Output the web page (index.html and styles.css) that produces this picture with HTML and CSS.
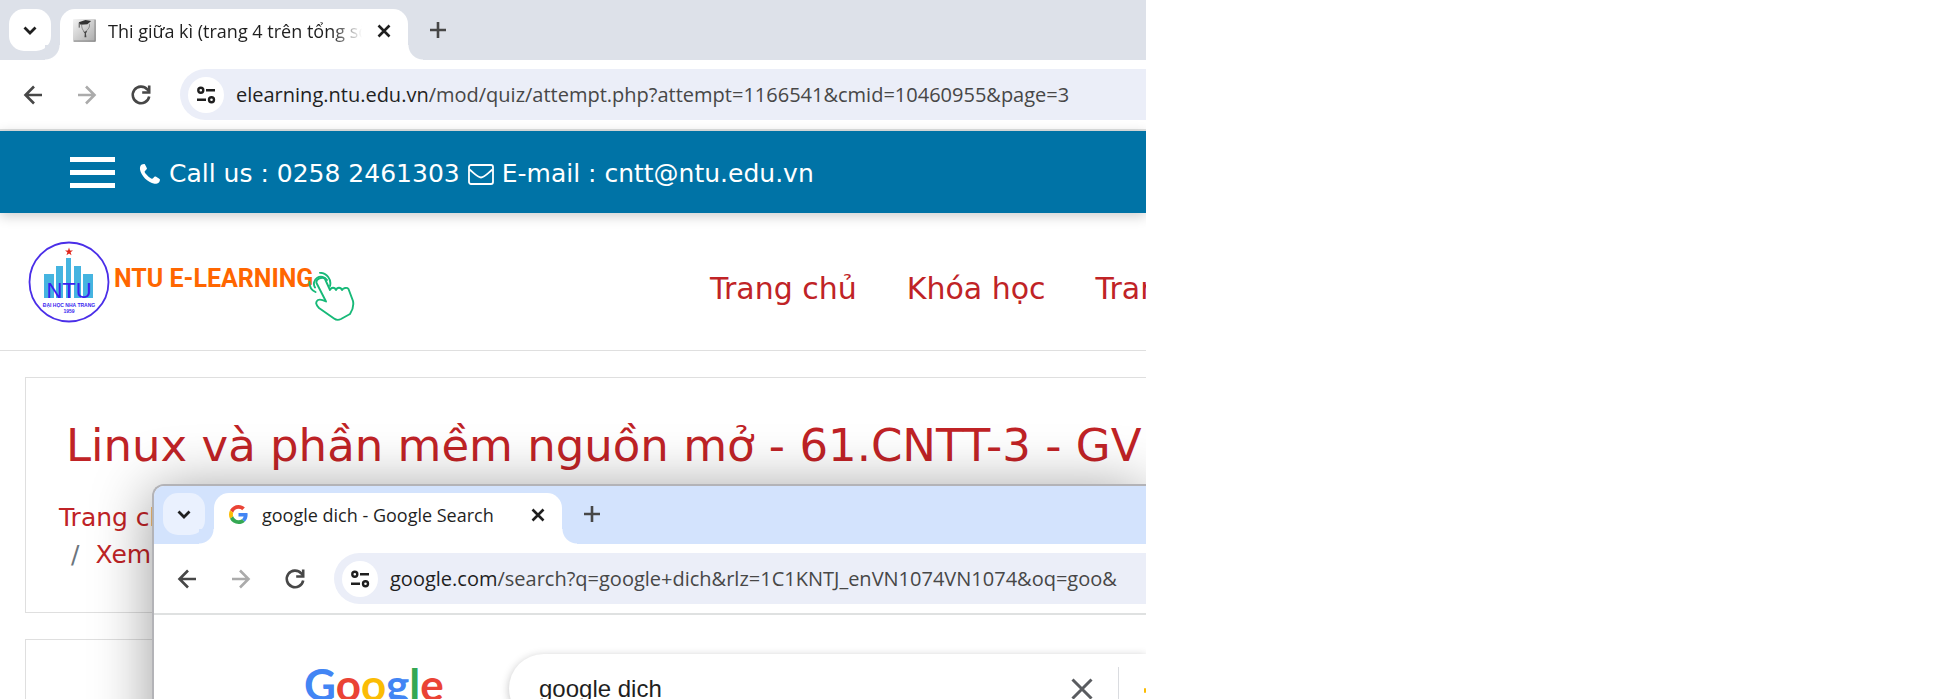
FILE: index.html
```html
<!DOCTYPE html>
<html lang="vi">
<head>
<meta charset="utf-8">
<title>Thi giữa kì</title>
<link rel="stylesheet" href="styles.css">
</head>
<body>
<svg class="sprite" aria-hidden="true">
  <symbol id="chevron" viewBox="0 0 20 20"><path d="M4.500 7.500l5.500 5.500 5.500-5.500" fill="none" stroke="#1f1f1f" stroke-width="2.800"/></symbol>
  <symbol id="close" viewBox="0 0 20 20"><path d="M4.500 4.500l11 11M15.500 4.500l-11 11" stroke="#1f1f1f" stroke-width="2.600"/></symbol>
  <symbol id="plus" viewBox="0 0 20 20"><path d="M10 2v16M2 10h16" stroke="#474747" stroke-width="2.600"/></symbol>
  <symbol id="back" viewBox="0 0 24 24"><path d="M21 12H5M13 3.500L4.500 12l8.500 8.500" fill="none" stroke="currentColor" stroke-width="2.600"/></symbol>
  <symbol id="forward" viewBox="0 0 24 24"><path d="M3 12h16M11 3.500l8.500 8.500-8.500 8.500" fill="none" stroke="currentColor" stroke-width="2.600"/></symbol>
  <symbol id="reload" viewBox="0 0 24 24"><path d="M20.200 13.500a8.300 8.300 0 1 1-2-7.200L20 8.500" fill="none" stroke="#474747" stroke-width="2.600"/><path d="M20.200 2.500v7h-7" fill="none" stroke="#474747" stroke-width="2.600"/></symbol>
  <symbol id="tune" viewBox="0 0 20 20"><g fill="none" stroke="#1f1f1f" stroke-width="2.400"><circle cx="4.800" cy="5.200" r="2.500"/><path d="M10 5.200h9M1 14.800h9"/><circle cx="15.500" cy="14.800" r="2.500"/></g></symbol>
</svg>
<main class="desktop">
  <section class="browser">
    <div class="tabstrip">
      <button class="tab-search" aria-label="Search tabs"><svg class="i20"><use href="#chevron"/></svg></button>
      <div class="tab">
        <svg class="favicon" viewBox="0 0 24 24"><defs><linearGradient id="fg" x1="0" y1="0" x2="1" y2="1"><stop offset="0" stop-color="#f4f4f4"/><stop offset="1" stop-color="#a9a9a9"/></linearGradient></defs><rect width="24" height="24" rx="1" fill="url(#fg)"/><path d="M23 1v22H1" fill="none" stroke="#888"/><path d="M6 3.500L13 1l6 1-4 3.500-7 .5z" fill="#333"/><path d="M6.500 4v5" fill="none" stroke="#444"/><path d="M9 6c0 3 1 6 3 7M17 5c1 3-1 6-4 8" fill="none" stroke="#888"/><path d="M10 12l2 1.500 3-1.500-1.500 3 .5 4h-2l.300-4z" fill="#444"/></svg>
        <span class="tab-title fade">Thi giữa kì (trang 4 trên tổng số</span>
        <button class="bare" aria-label="Close tab"><svg class="i20"><use href="#close"/></svg></button>
      </div>
      <button class="bare new-tab" aria-label="New tab"><svg class="i20"><use href="#plus"/></svg></button>
    </div>
    <div class="toolbar">
      <button class="bare nav-btn" aria-label="Back"><svg class="i24"><use href="#back"/></svg></button>
      <button class="bare nav-btn off" aria-label="Forward"><svg class="i24"><use href="#forward"/></svg></button>
      <button class="bare nav-btn" aria-label="Reload"><svg class="i24"><use href="#reload"/></svg></button>
      <div class="omnibox">
        <button class="site-info" aria-label="Site information"><svg class="i20"><use href="#tune"/></svg></button>
        <span class="url"><b>elearning.ntu.edu.vn</b>/mod/quiz/attempt.php?attempt=1166541&amp;cmid=10460955&amp;page=3</span>
      </div>
    </div>
    <div class="contact">
      <button class="bare burger" aria-label="Menu"><i></i><i></i><i></i></button>
      <p class="contact-text">
        <svg class="phone" viewBox="0 0 22 22"><path d="M21 16.500c0 1-.6 2.600-1.100 3.100-1 1-3 1.400-4.400 1.200C8.500 19.500 2 12.500 1 6.500.8 4.500 1.300 2.500 2.800 1.600 3.800 1 5 .8 5.600 1c.4.200 2.400 4 2.400 4.600 0 1.200-2.400 2.200-2.400 3.200 0 1.400 5.600 7 7.400 7 1 0 2-2.400 3.200-2.400.6 0 4.600 2.200 4.800 3.100z" fill="#fff"/></svg>
        <span>Call us : 0258 2461303</span>
        <svg class="mail" viewBox="0 0 26 22"><rect x="1" y="2" width="24" height="19" rx="2" fill="none" stroke="#fff" stroke-width="1.800"/><path d="M1.500 6.500c4 3 8 8 11.500 8s7.500-5 11.500-8" fill="none" stroke="#fff" stroke-width="1.800"/></svg>
        <span>E-mail : cntt@ntu.edu.vn</span>
      </p>
    </div>
    <header class="site-head">
      <a class="brand" href="#">
        <svg class="seal" viewBox="0 0 82 82"><circle cx="41" cy="41" r="39.500" fill="#fff" stroke="#4a2ee8" stroke-width="1.800"/><path d="M41 6.500l1 3h3l-2.400 1.800.9 3L41 12.500l-2.500 1.800.9-3L37 9.500h3z" fill="#e0251b"/><path d="M16 33h10v24H16zM28 25h7v32h-7zM38 17h5v40h-5zM46 25h7v32h-7zM55 33h10v24H55z" fill="#45b4e0"/><text x="41" y="57" class="seal-name">NTU</text><text x="41" y="66" class="seal-sub">ĐẠI HỌC NHA TRANG</text><text x="41" y="72" class="seal-sub">1959</text></svg>
        <span class="brand-name">NTU E-LEARNING</span>
        <svg class="hand" viewBox="0 0 50 50"><g fill="none" stroke="#17b978" stroke-width="1.900" stroke-linejoin="round" stroke-linecap="round"><path d="M20 29.500L10.500 11c-1-4 6-7 8.500-4l5 11c1-3 5-3 6 0 1-3 5-3 6 0 1-2 5-3 6.500-1l4.500 12c1 5-1 10-3 13l-9 5c-2 1-5 1-7-.5L13 36c-3-3-4-6-1-8 2-1 5 0 8 1.500z" fill="#fff"/><path d="M9 15.500A7 7 0 1 1 21 8M9.500 20A10.500 10.500 0 0 1 3.500 10M14 .8A10.500 10.500 0 0 1 24 14"/></g></svg>
      </a>
      <nav class="menu"><a href="#">Trang chủ</a><a href="#">Khóa học</a><a href="#">Trang</a></nav>
    </header>
    <div class="page">
      <article class="card">
        <h1>Linux và phần mềm nguồn mở - 61.CNTT-3 - GV</h1>
        <ol class="crumbs"><li><a href="#">Trang chủ</a></li><li><a href="#">Xem</a></li></ol>
      </article>
      <article class="card next"></article>
    </div>
  </section>

  <section class="browser popup">
    <div class="tabstrip">
      <button class="tab-search" aria-label="Search tabs"><svg class="i20"><use href="#chevron"/></svg></button>
      <div class="tab">
        <svg class="favicon google" viewBox="0 0 48 48"><path fill="#EA4335" d="M24 9.500c3.540 0 6.710 1.220 9.210 3.600l6.850-6.850C35.900 2.380 30.470 0 24 0 14.620 0 6.510 5.380 2.560 13.220l7.980 6.190C12.430 13.720 17.740 9.500 24 9.500z"/><path fill="#4285F4" d="M46.980 24.550c0-1.570-.15-3.090-.38-4.550H24v9.020h12.940c-.58 2.960-2.260 5.480-4.780 7.180l7.730 6c4.510-4.180 7.090-10.360 7.090-17.650z"/><path fill="#FBBC05" d="M10.530 28.590c-.48-1.450-.76-2.990-.76-4.590s.27-3.140.76-4.590l-7.980-6.190C.92 16.460 0 20.120 0 24c0 3.880.92 7.540 2.560 10.780l7.970-6.190z"/><path fill="#34A853" d="M24 48c6.480 0 11.930-2.130 15.890-5.810l-7.730-6c-2.150 1.450-4.920 2.300-8.160 2.300-6.260 0-11.570-4.220-13.470-9.910l-7.980 6.190C6.510 42.620 14.620 48 24 48z"/></svg>
        <span class="tab-title">google dich - Google Search</span>
        <button class="bare" aria-label="Close tab"><svg class="i20"><use href="#close"/></svg></button>
      </div>
      <button class="bare new-tab" aria-label="New tab"><svg class="i20"><use href="#plus"/></svg></button>
    </div>
    <div class="toolbar">
      <button class="bare nav-btn" aria-label="Back"><svg class="i24"><use href="#back"/></svg></button>
      <button class="bare nav-btn off" aria-label="Forward"><svg class="i24"><use href="#forward"/></svg></button>
      <button class="bare nav-btn" aria-label="Reload"><svg class="i24"><use href="#reload"/></svg></button>
      <div class="omnibox">
        <button class="site-info" aria-label="Site information"><svg class="i20"><use href="#tune"/></svg></button>
        <span class="url"><b>google.com</b>/search?q=google+dich&amp;rlz=1C1KNTJ_enVN1074VN1074&amp;oq=goo&amp;</span>
      </div>
    </div>
    <div class="results">
      <div class="wordmark"><span class="b">G</span><span class="r">o</span><span class="y">o</span><span class="b">g</span><span class="g">l</span><span class="r">e</span></div>
      <div class="searchbox">
        <input class="query" type="text" value="google dich" aria-label="Search">
        <button class="bare clear" aria-label="Clear"><svg class="i24" viewBox="0 0 24 24"><path d="M2.500 2.500l19 19M21.500 2.500l-19 19" stroke="#5a5c60" stroke-width="3"/></svg></button>
        <span class="rule"></span>
        <svg class="mic" viewBox="0 0 2 24"><rect y="11" width="2" height="5" rx="1" fill="#fbbc04"/></svg>
      </div>
    </div>
  </section>
</main>
</body>
</html>
```
FILE: styles.css
```css
* { box-sizing: border-box; }
body { margin: 0; background: #fff; font-family: "DejaVu Sans", sans-serif; height: 100vh; overflow: hidden; }
button { font: inherit; padding: 0; border: 0; }
svg { display: block; flex: none; }
a { color: #c02326; text-decoration: none; }
.sprite { position: absolute; width: 0; height: 0; }
.i20 { width: 20px; height: 20px; }
.i24 { width: 24px; height: 24px; }
.bare { background: none; display: flex; align-items: center; justify-content: center; flex: none; }

.desktop { position: relative; width: 59%; height: 100vh; overflow: hidden; }
.browser { --strip: #dde1e9; --chip: #fff; background: #fff; }

.tabstrip { display: flex; align-items: flex-start; height: 60px; padding: 9px 9px 0; background: var(--strip); }
.tab-search { display: flex; align-items: center; justify-content: center; flex: none; width: 42px; height: 42px; border-radius: 15px; background: var(--chip); }
.tab { position: relative; display: flex; align-items: center; gap: 12px; width: 348px; height: 51px; margin-left: 9px; padding: 0 14px 8px 13px; border-radius: 15px 15px 0 0; background: #fff; }
.tab::before, .tab::after { content: ""; position: absolute; bottom: 0; width: 15px; height: 15px; }
.tab::before { right: 100%; background: radial-gradient(circle at 0 0, var(--strip) 14px, #fff 15px); }
.tab::after { left: 100%; background: radial-gradient(circle at 100% 0, var(--strip) 14px, #fff 15px); }
.favicon { width: 23px; height: 23px; }
.google { width: 19px; height: 19px; margin: 0 2px; }
.tab-title { flex: 1; overflow: hidden; white-space: nowrap; font: 18px/24px "Open Sans", "Noto Sans", sans-serif; color: #1f1f1f; }
.fade { -webkit-mask-image: linear-gradient(to right, #000 88%, transparent); mask-image: linear-gradient(to right, #000 88%, transparent); }
.new-tab { width: 42px; height: 42px; margin-left: 9px; }

.toolbar { display: flex; align-items: center; height: 71px; padding-left: 12px; border-bottom: 2px solid #dfe1e1; background: #fff; }
.nav-btn { width: 42px; height: 42px; margin-right: 12px; color: #474747; }
.off { color: #ababab; }
.omnibox { display: flex; align-items: center; gap: 12px; flex: 1; min-width: 0; height: 51px; margin-left: 6px; padding-left: 8px; border-radius: 26px 0 0 26px; background: #ebeef8; overflow: hidden; }
.site-info { display: flex; align-items: center; justify-content: center; flex: none; width: 36px; height: 36px; border-radius: 50%; background: #fff; }
.url { white-space: nowrap; font: 20px/28px "Open Sans", "Noto Sans", sans-serif; color: #474747; }
.url b { font-weight: 400; color: #1f1f1f; }

.contact { position: relative; display: flex; align-items: center; height: 82px; padding: 0 70px; background: #0073a6; box-shadow: 0 3px 12px rgba(0, 0, 0, .2); }
.burger { flex-direction: column; gap: 8px; width: 45px; }
.burger i { width: 45px; height: 5px; background: #fff; }
.contact-text { display: flex; align-items: center; gap: 8px; margin: 0 0 0 24px; padding-top: 4px; color: #fff; font-size: 25px; line-height: 36px; white-space: nowrap; }
.phone { width: 22px; height: 22px; }
.mail { width: 26px; height: 22px; }

.site-head { display: flex; align-items: center; height: 138px; padding-left: 28px; border-bottom: 1px solid #dfdfdf; }
.brand { display: flex; align-items: center; }
.seal { width: 82px; height: 82px; }
.seal-name { font: 22px "Liberation Sans", sans-serif; fill: #3a1ff0; text-anchor: middle; }
.seal-sub { font: bold 5px "Liberation Sans", sans-serif; fill: #3a1ff0; text-anchor: middle; }
.brand-name { width: 204px; margin: 0 0 6px 4px; font: bold 25px/36px Roboto, "Liberation Sans", sans-serif; color: #ff6600; white-space: nowrap; }
.hand { width: 50px; height: 50px; margin: 30px 0 0 -12px; }
.menu { display: flex; gap: 50px; margin-left: 354px; padding-top: 14px; font-size: 30px; line-height: 40px; white-space: nowrap; }

.page { padding: 26px 0 0 25px; }
.card { height: 236px; padding: 38px 33px 0; border: 1px solid #dfdfdf; border-right: 0; white-space: nowrap; }
.next { margin-top: 26px; }
h1 { margin: 0 0 23px 7px; font-weight: 400; font-size: 45px; line-height: 60px; color: #c02326; }
.crumbs { list-style: none; margin: 0; padding: 0; font-size: 25px; line-height: 37px; }
.crumbs li + li::before { content: "/"; margin: 0 16px 0 12px; color: #6c757d; }

.popup { --strip: #d3e3fd; --chip: #eaf1fe; position: absolute; left: 152px; top: 484px; right: 0; height: 300px; border: 2px solid #b3b3b7; border-right: 0; border-radius: 12px 0 0 0; box-shadow: 0 6px 60px rgba(0, 0, 0, .4); overflow: hidden; }
.popup .tabstrip { height: 58px; padding-top: 7px; }
.results { display: flex; align-items: flex-start; padding: 39px 0 0 150px; }
.wordmark { width: 205px; font: bold 44px/60px Lato, sans-serif; }
.b { color: #4285f4; }
.r { color: #ea4335; }
.y { color: #fbbc05; }
.g { color: #34a853; }
.searchbox { display: flex; align-items: center; flex: 1; min-width: 0; height: 69px; padding-left: 30px; border-radius: 35px 0 0 35px; box-shadow: 0 2px 9px rgba(32, 33, 36, .28); overflow: hidden; }
.query { flex: 1; min-width: 0; padding: 0; border: 0; outline: 0; background: none; font: 24px/32px "Liberation Sans", Arial, sans-serif; color: #1f1f1f; }
.clear { width: 24px; }
.rule { width: 1px; height: 44px; margin: 0 25px 0 24px; background: #dadce0; }
.mic { width: 2px; height: 24px; }
```
